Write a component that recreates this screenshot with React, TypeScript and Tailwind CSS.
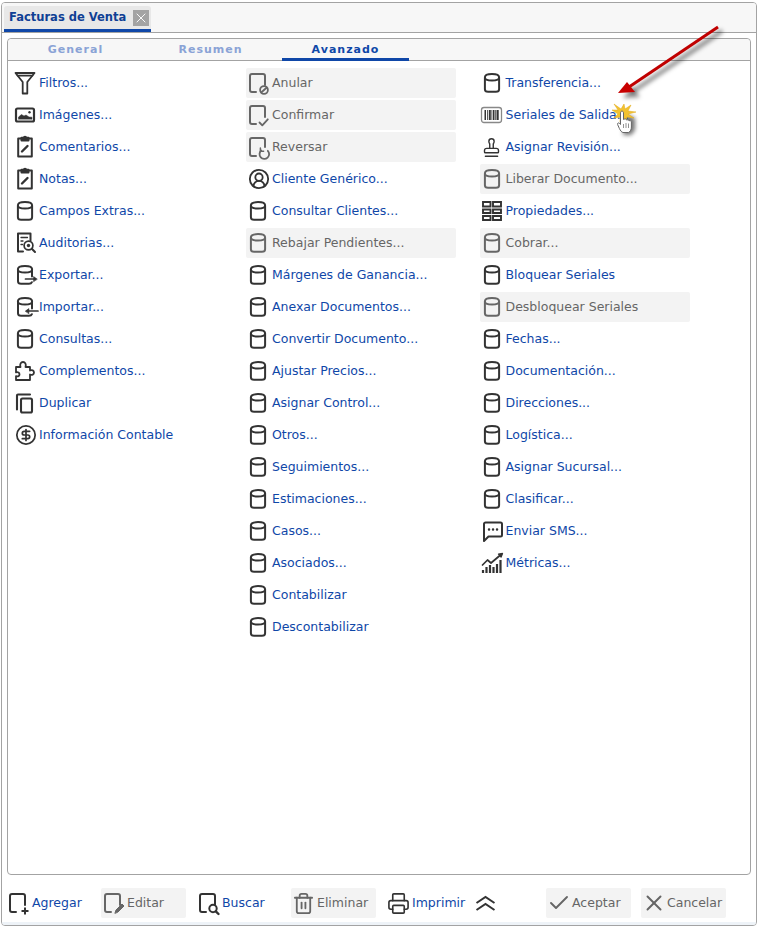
import React from "react";
import { Check, CircleDollarSign, CircleUserRound, Printer, Stamp, Trash2, X } from "lucide-react";

type IconName =
	| "db" | "funnel" | "image" | "note" | "audit" | "export" | "import" | "puzzle" | "copy" | "dollar"
	| "anular" | "confirmar" | "reversar" | "user" | "barcode" | "stamp" | "grid" | "sms" | "chart"
	| "add" | "edit" | "search" | "trash" | "print" | "check" | "close";

interface Item {
	label: string;
	icon: IconName;
	disabled?: boolean;
}

const CYL_TOP = "M4.9 7.5c0-2.6 3.5-3.4 7.1-3.4s7.1.8 7.1 3.4";
const DOC = "M10 22H6a2 2 0 0 1-2-2V6a2 2 0 0 1 2-2h11a2 2 0 0 1 2 2v9";

const Svg: React.FC<{ children: React.ReactNode; sw?: number }> = ({ children, sw = 2 }) => (
	<svg width="26" height="26" viewBox="0 0 26 26" fill="none" stroke="currentColor" strokeWidth={sw} strokeLinecap="round" strokeLinejoin="round" className="shrink-0">
		{children}
	</svg>
);

const Icon: React.FC<{ name: IconName }> = ({ name }) => {
	switch (name) {
		case "db":
			return (
				<Svg>
					<path d="M4.9 7.5c0-2.6 3.5-3.4 7.1-3.4s7.1.8 7.1 3.4v11.7c0 1.7-1.5 2.6-3.2 2.6H8.1c-1.7 0-3.2-.9-3.2-2.6z" />
					<path d="M4.9 7.5c0 2.3 3.5 3 7.1 3s7.1-.7 7.1-3" />
				</Svg>
			);
		case "funnel":
			return (
				<Svg sw={1.8}>
					<path d="M2.5 3h19l-7.2 9v11.5H9.7V12z" />
					<path d="M4.5 5.6h15" />
				</Svg>
			);
		case "image":
			return (
				<Svg sw={2.2}>
					<rect x="3" y="6.5" width="18" height="13" rx="1.5" />
					<path d="M5.5 17v-2l3-2.5 2.5 1.5 2-1 3 2 3 .2V17z" fill="currentColor" strokeWidth="0.5" />
					<circle cx="16.5" cy="10.3" r="1.2" fill="currentColor" stroke="none" />
				</Svg>
			);
		case "note":
			return (
				<Svg>
					<path d="M8.5 4.5H5.2v18h13.6v-18h-3.300" />
					<path d="M8.5 6.500V3.800h2a1.600 1.600 0 0 1 3 0h2v2.700z" fill="currentColor" />
					<path d="M9 17.500l5.500-5.500" strokeWidth="2.400" />
				</Svg>
			);
		case "audit":
			return (
				<Svg sw={1.7}>
					<path d="M10 21.500H5V3.500h12.500v7" strokeWidth="2" />
					<path d="M8 7.500h6.500M8 11h2M8 14.500h1.500" strokeWidth="1.300" />
					<circle cx="15.500" cy="15.500" r="4.400" />
					<circle cx="15.500" cy="15.500" r="1.700" fill="currentColor" stroke="none" />
					<path d="M18.800 18.800l3.200 3.200" strokeWidth="2" />
				</Svg>
			);
		case "export":
			return (
				<Svg>
					<path d="M19 14.500v-7M5 7.500v11.700c0 1.700 1.400 2.600 3.100 2.600h7.800c1.500 0 2.600-.5 3-1.600" />
					<path d={CYL_TOP} />
					<path d="M4.900 7.500c0 2.300 3.500 3 7.100 3s7.100-.7 7.100-3" />
					<path d="M12.500 17h10" strokeWidth="1.700" />
					<path d="M24 17l-3.400-2.400v4.800z" fill="currentColor" strokeWidth="0.6" />
				</Svg>
			);
		case "import":
			return (
				<Svg>
					<path d="M19 14.500v-7M5 7.500v11.700c0 1.700 1.400 2.600 3.100 2.600h7.800c1.500 0 2.600-.5 3-1.600" />
					<path d={CYL_TOP} />
					<path d="M4.900 7.500c0 2.300 3.500 3 7.100 3s7.100-.7 7.100-3" />
					<path d="M14 17h11" strokeWidth="1.700" />
					<path d="M12.500 17l3.400-2.400v4.800z" fill="currentColor" strokeWidth="0.6" />
				</Svg>
			);
		case "puzzle":
			return (
				<Svg sw={1.8}>
					<path d="M3 9h4.500c-1-3 .5-5 2.500-5s3.500 2 2.500 5H17v3.500c2-1 4 0 4 2s-2 3-4 2V22H3v-3.800c2 .5 3.500-.2 3.500-1.800S5 13.800 3 14.400z" />
				</Svg>
			);
		case "copy":
			return (
				<Svg sw={2.1}>
					<path d="M4 19.500v-14a1 1 0 0 1 1-1h12" />
					<rect x="8" y="8.500" width="11" height="14" rx="1.500" />
				</Svg>
			);
		case "dollar":
			return (
				<span className="w-[26px] h-[26px] flex items-center justify-center shrink-0 pr-[1px]">
					<CircleDollarSign size={22} strokeWidth={1.9} />
				</span>
			);
		case "user":
			return (
				<span className="w-[26px] h-[26px] flex items-center justify-center shrink-0 pr-[1px]">
					<CircleUserRound size={22} strokeWidth={2} />
				</span>
			);
		case "anular":
			return (
				<Svg>
					<path d={DOC} />
					<circle cx="18" cy="20" r="3.900" strokeWidth="1.800" />
					<path d="M15.500 22.200l5-4.400" strokeWidth="1.800" />
				</Svg>
			);
		case "confirmar":
			return (
				<Svg>
					<path d={DOC} />
					<path d="M13.500 20.500l2.800 2.800 5.500-6" strokeWidth="1.800" />
				</Svg>
			);
		case "reversar":
			return (
				<Svg>
					<path d="M10 22H6a2 2 0 0 1-2-2V6a2 2 0 0 1 2-2h11a2 2 0 0 1 2 2v7" />
					<path d="M15.200 16.500a4.800 4.800 0 1 0 6.600.3" strokeWidth="1.800" />
					<path d="M14.400 14v3.200h3.200" strokeWidth="1.500" />
				</Svg>
			);
		case "barcode":
			return (
				<svg width="26" height="26" viewBox="0 0 26 26" fill="none" className="shrink-0">
					<rect x="1.500" y="5.500" width="20" height="15" rx="2.500" stroke="#888888" strokeWidth="1.300" />
					<path d="M4.500 8H6v10H4.500zM7 8h.8v10H7zM8.800 8h2v10h-2zM11.500 8h.8v10h-.8zM13 8h1.500v10H13zM15.200 8h.7v10h-.7zM16.500 8h2.200v10h-2.200z" fill="currentColor" />
				</svg>
			);
		case "stamp":
			return (
				<span className="w-[26px] h-[26px] flex items-center justify-center shrink-0 pr-[3px]">
					<Stamp size={21} strokeWidth={1.6} />
				</span>
			);
		case "grid":
			return (
				<Svg sw={1.9}>
					<path d="M3 4h7.500v4.500H3zM13 4h8v4.500h-8zM3 11.500h7.500V15H3zM13 11.500h8V15h-8zM3 18h7.500v4H3zM13 18h8v4h-8z" strokeLinejoin="miter" />
				</Svg>
			);
		case "sms":
			return (
				<Svg>
					<path d="M5.500 4.500h15a1.500 1.500 0 0 1 1.500 1.500v11a1.500 1.500 0 0 1-1.500 1.500H8.500L4 23V6a1.500 1.500 0 0 1 1.500-1.500z" />
					<path d="M9 11.500h.1M13 11.500h.1M17 11.500h.1" strokeWidth="2.400" />
				</Svg>
			);
		case "chart":
			return (
				<Svg sw={1.3}>
					<path d="M3 23v-3M6.500 23v-6M10 23v-8M13.500 23v-6M17 23v-9M20.500 23V10" strokeWidth="2.200" strokeLinecap="butt" />
					<path d="M2.500 15l5-5 3.500 3 9.500-8" strokeWidth="1.700" />
					<path d="M22.500 3.500l-4 .6 2.600 3z" fill="currentColor" />
				</Svg>
			);
		case "add":
			return (
				<Svg>
					<path d={DOC} />
					<path d="M19 17.500v7M15.500 21h7" strokeWidth="2" strokeLinecap="butt" />
				</Svg>
			);
		case "edit":
			return (
				<Svg>
					<path d={DOC} />
					<path d="M14 23l1-3 6-6 2 2-6 6z" fill="currentColor" strokeWidth="1" />
				</Svg>
			);
		case "search":
			return (
				<Svg>
					<path d={DOC} />
					<circle cx="17" cy="18.500" r="3.700" />
					<path d="M19.800 21.300l2.700 2.700" strokeWidth="2.400" />
				</Svg>
			);
		case "trash":
			return (
				<span className="w-[26px] h-[26px] flex items-center justify-center shrink-0 pr-[2px]">
					<Trash2 size={23} strokeWidth={1.9} />
				</span>
			);
		case "print":
			return (
				<span className="w-[26px] h-[26px] flex items-center justify-center shrink-0 pr-[2px]">
					<Printer size={23} strokeWidth={1.7} />
				</span>
			);
		case "check":
			return (
				<span className="w-[26px] h-[26px] flex items-center justify-center shrink-0">
					<Check size={24} strokeWidth={1.9} />
				</span>
			);
		case "close":
			return (
				<span className="w-[26px] h-[26px] flex items-center justify-center shrink-0">
					<X size={26} strokeWidth={1.8} />
				</span>
			);
	}
};

const column1: Item[] = [
	{ label: "Filtros...", icon: "funnel" },
	{ label: "Imágenes...", icon: "image" },
	{ label: "Comentarios...", icon: "note" },
	{ label: "Notas...", icon: "note" },
	{ label: "Campos Extras...", icon: "db" },
	{ label: "Auditorias...", icon: "audit" },
	{ label: "Exportar...", icon: "export" },
	{ label: "Importar...", icon: "import" },
	{ label: "Consultas...", icon: "db" },
	{ label: "Complementos...", icon: "puzzle" },
	{ label: "Duplicar", icon: "copy" },
	{ label: "Información Contable", icon: "dollar" },
];

const column2: Item[] = [
	{ label: "Anular", icon: "anular", disabled: true },
	{ label: "Confirmar", icon: "confirmar", disabled: true },
	{ label: "Reversar", icon: "reversar", disabled: true },
	{ label: "Cliente Genérico...", icon: "user" },
	{ label: "Consultar Clientes...", icon: "db" },
	{ label: "Rebajar Pendientes...", icon: "db", disabled: true },
	{ label: "Márgenes de Ganancia...", icon: "db" },
	{ label: "Anexar Documentos...", icon: "db" },
	{ label: "Convertir Documento...", icon: "db" },
	{ label: "Ajustar Precios...", icon: "db" },
	{ label: "Asignar Control...", icon: "db" },
	{ label: "Otros...", icon: "db" },
	{ label: "Seguimientos...", icon: "db" },
	{ label: "Estimaciones...", icon: "db" },
	{ label: "Casos...", icon: "db" },
	{ label: "Asociados...", icon: "db" },
	{ label: "Contabilizar", icon: "db" },
	{ label: "Descontabilizar", icon: "db" },
];

const column3: Item[] = [
	{ label: "Transferencia...", icon: "db" },
	{ label: "Seriales de Salida...", icon: "barcode" },
	{ label: "Asignar Revisión...", icon: "stamp" },
	{ label: "Liberar Documento...", icon: "db", disabled: true },
	{ label: "Propiedades...", icon: "grid" },
	{ label: "Cobrar...", icon: "db", disabled: true },
	{ label: "Bloquear Seriales", icon: "db" },
	{ label: "Desbloquear Seriales", icon: "db", disabled: true },
	{ label: "Fechas...", icon: "db" },
	{ label: "Documentación...", icon: "db" },
	{ label: "Direcciones...", icon: "db" },
	{ label: "Logística...", icon: "db" },
	{ label: "Asignar Sucursal...", icon: "db" },
	{ label: "Clasificar...", icon: "db" },
	{ label: "Enviar SMS...", icon: "sms" },
	{ label: "Métricas...", icon: "chart" },
];

const Row: React.FC<{ item: Item; className?: string }> = ({ item, className = "" }) => (
	<div
		className={`flex items-center h-[30px] rounded-[2px] whitespace-nowrap ${
			item.disabled ? "bg-[#f3f3f3] text-[#666666]" : "text-[#0f47a8]"
		} ${className}`}
	>
		<span className={item.disabled ? "text-[#666666]" : "text-[#333333]"}>
			<Icon name={item.icon} />
		</span>
		<span>{item.label}</span>
	</div>
);

const Column: React.FC<{ items: Item[] }> = ({ items }) => (
	<div className="w-[210px] flex flex-col gap-[2px]">
		{items.map((item) => (
			<Row key={item.label} item={item} />
		))}
	</div>
);

const Overlay: React.FC = () => (
	<>
		{/* soft shadows */}
		<svg width="760" height="140" viewBox="0 0 760 140" fill="none" className="absolute left-0 top-0 pointer-events-none blur-[2px]">
			<path d="M722 31L632 92" stroke="#000000" strokeOpacity="0.45" strokeWidth="4" />
			<path d="M623 98l9-11 8 10z" fill="#000000" fillOpacity="0.45" />
			<path d="M625 114l10 4v12l-4 5h-8z" fill="#000000" fillOpacity="0.55" />
		</svg>
		<svg width="760" height="140" viewBox="0 0 760 140" fill="none" className="absolute left-0 top-0 pointer-events-none">
			{/* red arrow */}
			<path d="M718 27L629 87" stroke="#c00000" strokeWidth="3" />
			<path d="M618 93l9-11 8 10z" fill="#c80000" />
			{/* click burst */}
			<path
				d="M614 104l7 5 3-5 1 5 6-4-3 6 8 1-8 2 6 4-7-1-1 5-3-4-3 4v-5l-6 1 4-4-6-4 6 0z"
				fill="#f2c230"
				stroke="#e0a818"
				strokeWidth="0.5"
			/>
			{/* hand */}
			<path
				d="M620.500 113c0-2.500 3-2.500 3 0v6.500l1-.4c1.200-.4 2 .1 2.200 1 1-.7 2.200-.3 2.300.7 1-.5 2.400 0 2.400 1.200v5c0 2.500-1 4.500-3 5.500h-5.500c-1.500-.5-2.500-2-3.500-4l-1.800-4c-.5-1.500 1-2.200 2.200-1l.7 1z"
				fill="#ffffff"
				stroke="#666666"
				strokeWidth="1"
			/>
			<path d="M623.500 124v4M626 123v5M628.500 123.500v4.500" stroke="#777777" strokeWidth="0.8" />
		</svg>
	</>
);

const FootBtn: React.FC<{ label: string; icon: IconName; disabled?: boolean; w?: string }> = ({ label, icon, disabled, w = "w-[85px]" }) => (
	<Row item={{ label, icon, disabled }} className={`${w} shrink-0`} />
);

export default function App() {
	return (
		<div className="relative w-[760px] h-[928px] bg-white pt-[2px] pl-[1px] text-[12.5px] leading-none font-['DejaVu_Sans',sans-serif]">
			<div className="w-[756px] h-[924px] border border-[#a3a3a3] rounded-[4px] bg-white flex flex-col overflow-hidden">
				{/* window tab strip */}
				<div className="h-[30px] shrink-0 bg-[#f7f7f7] border-b border-[#a3a3a3] flex items-end pl-[2px]">
					<div className="w-[147px] h-[26px] bg-[#e8e8e8] rounded-t-[3px] border-b-[3px] border-[#0f47a8] flex items-center justify-between pl-[5px] pr-[2px]">
						<span className="font-bold text-[#0f3f94] text-[11.5px] whitespace-nowrap">Facturas de Venta</span>
						<span className="w-[16px] h-[16px] bg-[#a3a3a3] flex items-center justify-center text-white">
							<X size={18} strokeWidth={1.4} />
						</span>
					</div>
				</div>

				{/* inner panel */}
				<div className="flex-1 flex flex-col bg-white px-[5px] pt-[5px]">
					<div className="h-[837px] border border-[#a3a3a3] rounded-[4px] flex flex-col">
						<div className="h-[22px] shrink-0 bg-[#f7f7f7] rounded-t-[4px] border-b border-[#a3a3a3] flex pl-[4px] text-[11px] font-bold tracking-[1px]">
							<div className="w-[127px] h-[22px] flex items-center justify-center pb-[1px] text-[#8aa3d6]">General</div>
							<div className="w-[8px]" />
							<div className="w-[127px] h-[22px] flex items-center justify-center pb-[1px] text-[#8aa3d6]">Resumen</div>
							<div className="w-[8px]" />
							<div className="w-[127px] h-[22px] flex items-center justify-center pt-[2px] text-[#0f47a8] border-b-[3px] border-[#0f47a8]">Avanzado</div>
						</div>
						<div className="flex pt-[7px] pl-[5px] gap-[23.5px]">
							<div className="w-[209.5px]">
								<Column items={column1} />
							</div>
							<Column items={column2} />
							<Column items={column3} />
						</div>
					</div>

					{/* footer actions */}
					<div className="flex items-center h-[30px] mt-[13px] -ml-[1px] gap-[10px]">
						<FootBtn label="Agregar" icon="add" />
						<FootBtn label="Editar" icon="edit" disabled />
						<FootBtn label="Buscar" icon="search" />
						<FootBtn label="Eliminar" icon="trash" disabled />
						<FootBtn label="Imprimir" icon="print" w="w-[80px]" />
						<svg width="26" height="26" viewBox="0 0 26 26" fill="none" stroke="#333333" strokeWidth="2" className="shrink-0 -ml-[3px]">
							<path d="M3.500 13L12.500 7l9 6M3.500 20l9-6 9 6" />
						</svg>
						<div className="ml-[37px] flex gap-[10px]">
							<FootBtn label="Aceptar" icon="check" disabled />
							<FootBtn label="Cancelar" icon="close" disabled />
						</div>
					</div>
				</div>
				<div className="h-[3px] shrink-0 bg-[#eef3f8]" />
			</div>
			<Overlay />
		</div>
	);
}
